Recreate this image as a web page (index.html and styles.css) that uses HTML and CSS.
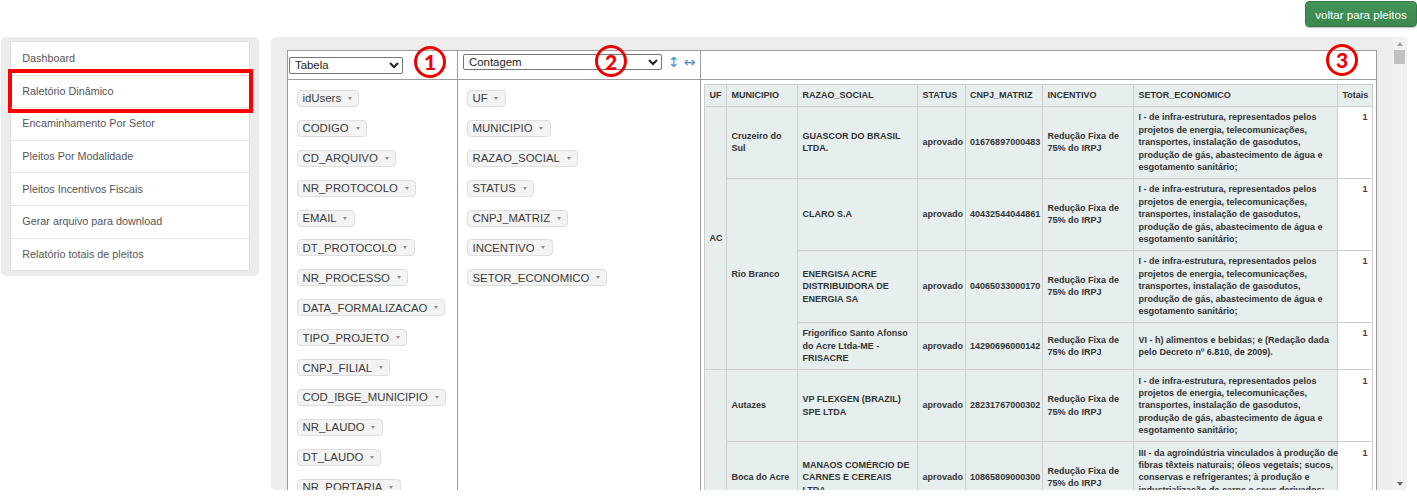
FILE: index.html
```html
<!DOCTYPE html>
<html lang="pt-BR">
<head>
<meta charset="utf-8">
<title>Relatório Dinâmico</title>
<link rel="stylesheet" href="styles.css">
</head>
<body>
<header class="topbar">
  <button class="btn-back" type="button">voltar para pleitos</button>
</header>
<div class="layout">
  <aside class="sidebar">
    <ul class="menu">
      <li class="menu-item">Dashboard</li>
      <li class="menu-item marked">Raletório Dinâmico<span class="mark-box"></span></li>
      <li class="menu-item">Encaminhamento Por Setor</li>
      <li class="menu-item">Pleitos Por Modalidade</li>
      <li class="menu-item">Pleitos Incentivos Fiscais</li>
      <li class="menu-item">Gerar arquivo para download</li>
      <li class="menu-item">Relatório totais de pleitos</li>
    </ul>
  </aside>
  <main class="panel">
    <div class="panel-body">
      <div class="pvt">
        <div class="cell renderers">
          <select class="sel sel-renderer"><option>Tabela</option></select>
        </div>
        <div class="cell vals">
          <select class="sel sel-agg"><option>Contagem</option></select>
          <span class="order row-order">↕</span>
          <span class="order col-order">↔</span>
        </div>
        <div class="cell cols"></div>

        <div class="cell unused">
          <ul class="attr-list">
            <li><span class="chip">idUsers<i class="tri"></i></span></li>
            <li><span class="chip">CODIGO<i class="tri"></i></span></li>
            <li><span class="chip">CD_ARQUIVO<i class="tri"></i></span></li>
            <li><span class="chip">NR_PROTOCOLO<i class="tri"></i></span></li>
            <li><span class="chip">EMAIL<i class="tri"></i></span></li>
            <li><span class="chip">DT_PROTOCOLO<i class="tri"></i></span></li>
            <li><span class="chip">NR_PROCESSO<i class="tri"></i></span></li>
            <li><span class="chip">DATA_FORMALIZACAO<i class="tri"></i></span></li>
            <li><span class="chip">TIPO_PROJETO<i class="tri"></i></span></li>
            <li><span class="chip">CNPJ_FILIAL<i class="tri"></i></span></li>
            <li><span class="chip">COD_IBGE_MUNICIPIO<i class="tri"></i></span></li>
            <li><span class="chip">NR_LAUDO<i class="tri"></i></span></li>
            <li><span class="chip">DT_LAUDO<i class="tri"></i></span></li>
            <li><span class="chip">NR_PORTARIA<i class="tri"></i></span></li>
          </ul>
        </div>
        <div class="cell rows">
          <ul class="attr-list">
            <li><span class="chip">UF<i class="tri"></i></span></li>
            <li><span class="chip">MUNICIPIO<i class="tri"></i></span></li>
            <li><span class="chip">RAZAO_SOCIAL<i class="tri"></i></span></li>
            <li><span class="chip">STATUS<i class="tri"></i></span></li>
            <li><span class="chip">CNPJ_MATRIZ<i class="tri"></i></span></li>
            <li><span class="chip">INCENTIVO<i class="tri"></i></span></li>
            <li><span class="chip">SETOR_ECONOMICO<i class="tri"></i></span></li>
          </ul>
        </div>
        <div class="cell area">
          <table class="pvt-table">
            <colgroup>
              <col style="width:22px"><col style="width:71px"><col style="width:120px"><col style="width:47.6px">
              <col style="width:77.4px"><col style="width:91px"><col style="width:204px"><col style="width:35px">
            </colgroup>
            <thead>
              <tr>
                <th>UF</th><th>MUNICIPIO</th><th>RAZAO_SOCIAL</th><th>STATUS</th><th>CNPJ_MATRIZ</th><th>INCENTIVO</th><th>SETOR_ECONOMICO</th><th class="total-label">Totais</th>
              </tr>
            </thead>
            <tbody>
              <tr>
                <th rowspan="4">AC</th>
                <th>Cruzeiro do<br>Sul</th>
                <th>GUASCOR DO BRASIL<br>LTDA.</th>
                <th>aprovado</th>
                <th>01676897000483</th>
                <th>Redução Fixa de<br>75% do IRPJ</th>
                <th>I - de infra-estrutura, representados pelos<br>projetos de energia, telecomunicações,<br>transportes, instalação de gasodutos,<br>produção de gás, abastecimento de água e<br>esgotamento sanitário;</th>
                <td>1</td>
              </tr>
              <tr>
                <th rowspan="3">Rio Branco</th>
                <th>CLARO S.A</th>
                <th>aprovado</th>
                <th>40432544044861</th>
                <th>Redução Fixa de<br>75% do IRPJ</th>
                <th>I - de infra-estrutura, representados pelos<br>projetos de energia, telecomunicações,<br>transportes, instalação de gasodutos,<br>produção de gás, abastecimento de água e<br>esgotamento sanitário;</th>
                <td>1</td>
              </tr>
              <tr>
                <th>ENERGISA ACRE<br>DISTRIBUIDORA DE<br>ENERGIA SA</th>
                <th>aprovado</th>
                <th>04065033000170</th>
                <th>Redução Fixa de<br>75% do IRPJ</th>
                <th>I - de infra-estrutura, representados pelos<br>projetos de energia, telecomunicações,<br>transportes, instalação de gasodutos,<br>produção de gás, abastecimento de água e<br>esgotamento sanitário;</th>
                <td>1</td>
              </tr>
              <tr>
                <th>Frigorífico Santo Afonso<br>do Acre Ltda-ME -<br>FRISACRE</th>
                <th>aprovado</th>
                <th>14290696000142</th>
                <th>Redução Fixa de<br>75% do IRPJ</th>
                <th>VI - h) alimentos e bebidas; e (Redação dada<br>pelo Decreto nº 6.810, de 2009).</th>
                <td>1</td>
              </tr>
              <tr>
                <th rowspan="3">AM</th>
                <th>Autazes</th>
                <th>VP FLEXGEN (BRAZIL)<br>SPE LTDA</th>
                <th>aprovado</th>
                <th>28231767000302</th>
                <th>Redução Fixa de<br>75% do IRPJ</th>
                <th>I - de infra-estrutura, representados pelos<br>projetos de energia, telecomunicações,<br>transportes, instalação de gasodutos,<br>produção de gás, abastecimento de água e<br>esgotamento sanitário;</th>
                <td>1</td>
              </tr>
              <tr class="tall">
                <th>Boca do Acre</th>
                <th>MANAOS COMÉRCIO DE<br>CARNES E CEREAIS<br>LTDA.</th>
                <th>aprovado</th>
                <th>10865809000300</th>
                <th>Redução Fixa de<br>75% do IRPJ</th>
                <th class="top">III - da agroindústria vinculados à produção de<br>fibras têxteis naturais; óleos vegetais; sucos,<br>conservas e refrigerantes; à produção e<br>industrialização de carne e seus derivados;</th>
                <td>1</td>
              </tr>
              <tr class="rest">
                <th colspan="6"></th>
                <td></td>
              </tr>
            </tbody>
          </table>
        </div>

        <span class="mark-circle c1">1</span>
        <span class="mark-circle c2">2</span>
        <span class="mark-circle c3">3</span>
      </div>
    </div>
    <div class="scrollbar">
      <span class="sb-btn"><i class="sb-up"></i></span>
      <span class="sb-track"><span class="sb-thumb"></span></span>
      <span class="sb-btn"><i class="sb-down"></i></span>
    </div>
  </main>
</div>
</body>
</html>
```

FILE: styles.css
```css
* { box-sizing: border-box; }
html, body { margin: 0; padding: 0; }
body {
  width: 1417px;
  height: 496px;
  overflow: hidden;
  background: #fff;
  font-family: "Liberation Sans", Arial, sans-serif;
  color: #333;
}

/* top bar */
.topbar {
  height: 37px;
  display: flex;
  justify-content: flex-end;
  align-items: flex-start;
  padding-top: 1px;
}
.btn-back {
  width: 112px;
  height: 26px;
  padding: 0;
  border: 1px solid #35794a;
  border-radius: 4px;
  background: linear-gradient(#43935a, #3a884e);
  color: #fff;
  font: 11.6px "Liberation Sans", Arial, sans-serif;
  box-shadow: 0 1px 1px rgba(0, 0, 0, .25);
}

/* layout */
.layout {
  display: flex;
  align-items: flex-start;
  gap: 12px;
  padding-left: 1px;
}

/* sidebar */
.sidebar {
  width: 258px;
  flex: none;
  background: #ececec;
  border-radius: 5px;
  padding: 4px 9px 5px 9px;
}
.menu {
  list-style: none;
  margin: 0;
  padding: 0;
  background: #fff;
  border: 1px solid #dedede;
  border-radius: 3px;
}
.menu-item {
  position: relative;
  height: 32.6px;
  display: flex;
  align-items: center;
  padding: 0 0 1px 11.3px;
  font-size: 10.8px;
  color: #555;
}
.menu-item + .menu-item { border-top: 1px solid #e4e4e4; }
.mark-box {
  position: absolute;
  left: -3px;
  right: -4px;
  top: -7px;
  bottom: -6px;
  border: 4px solid #f00;
}

/* main panel */
.panel {
  flex: 1;
  min-width: 0;
  margin-right: 10px;
  height: 453px;
  background: #ededed;
  border-radius: 5px;
  display: flex;
  overflow: hidden;
}
.panel-body {
  flex: 1;
  min-width: 0;
  padding: 13px 15px 0 16px;
  overflow: hidden;
}

/* pivot ui */
.pvt {
  position: relative;
  width: 1090px;
  display: grid;
  grid-template-columns: 170px 243px 676px;
  grid-template-rows: 29px auto;
  border-left: 1px solid #9c9c9c;
  border-top: 1px solid #9c9c9c;
  background: #fff;
}
.cell {
  border-right: 1px solid #9c9c9c;
  border-bottom: 1px solid #9c9c9c;
  min-width: 0;
}
.renderers { padding: 4px 0 0 1px; }
.vals {
  display: flex;
  align-items: flex-start;
  padding: 3px 0 0 5px;
}
.sel {
  font: 11.4px "Liberation Sans", Arial, sans-serif;
  height: 16px;
  padding: 0 0 0 1px;
  border: 1px solid #767676;
  border-radius: 2px;
  background: #fff;
  color: #222;
}
.sel-renderer { width: 114px; height: 17px; }
.sel-agg { width: 199px; }
.order {
  font: 14px/16px "DejaVu Sans", sans-serif;
  color: #4a8bd0;
}
.row-order { margin-left: 6px; }
.col-order { margin-left: 4px; }

.attr-list {
  list-style: none;
  margin: 0;
  padding: 3.55px 0 0 9px;
}
.attr-list li {
  height: 29.9px;
  display: flex;
  align-items: center;
}
.chip {
  display: inline-flex;
  align-items: center;
  height: 17px;
  padding: 0 6.3px 0 4.5px;
  background: #f3f3f3;
  border: 1px solid #dedede;
  border-radius: 4px;
  font-size: 11.4px;
  color: #3a3a3a;
  white-space: nowrap;
}
.tri {
  width: 0;
  height: 0;
  margin-left: 6.8px;
  border-left: 2px solid transparent;
  border-right: 2px solid transparent;
  border-top: 3px solid #8c8c8c;
}

.area { padding: 4px 0 0 3px; }

/* pivot table */
.pvt-table {
  border-collapse: collapse;
  table-layout: fixed;
  width: 668px;
  font-size: 9px;
  line-height: 12.4px;
  font-weight: bold;
  color: #333;
  text-align: left;
}
.pvt-table th,
.pvt-table td {
  border: 1px solid #cdcdcd;
  padding: 4.5px;
  white-space: nowrap;
  overflow: visible;
}
.pvt-table th {
  background: #e6eeee;
  vertical-align: middle;
  font-weight: bold;
}
.pvt-table thead th { padding-top: 4.2px; padding-bottom: 4.2px; }
.pvt-table td {
  background: #fff;
  vertical-align: top;
  text-align: right;
  color: #3d3d3d;
}
.pvt-table .total-label { text-align: right; }
.pvt-table .tall th { height: 71.5px; }
.pvt-table th.top { vertical-align: top; }
.pvt-table .rest th,
.pvt-table .rest td { height: 260px; }

/* annotation circles */
.mark-circle {
  position: absolute;
  width: 32px;
  height: 32px;
  border: 3px solid #ee0000;
  border-radius: 50%;
  display: flex;
  align-items: center;
  justify-content: center;
  font: 900 21px "Lato", "Liberation Sans", sans-serif;
  color: #ee0000;
}
.c1 { left: 126px; top: -5.5px; }
.c2 { left: 307px; top: -6px; }
.c3 { left: 1038px; top: -7.5px; }

/* fake scrollbar */
.scrollbar {
  width: 15px;
  flex: none;
  background: #f1f1f1;
  display: flex;
  flex-direction: column;
}
.sb-btn {
  height: 13px;
  display: flex;
  align-items: center;
  justify-content: center;
}
.sb-up {
  width: 0;
  height: 0;
  border-left: 3.5px solid transparent;
  border-right: 3.5px solid transparent;
  border-bottom: 4px solid #a3a3a3;
}
.sb-down {
  width: 0;
  height: 0;
  border-left: 3.5px solid transparent;
  border-right: 3.5px solid transparent;
  border-top: 4px solid #6a6a6a;
}
.sb-track {
  flex: 1;
  padding: 0 2px;
}
.sb-thumb {
  display: block;
  height: 14px;
  background: #c1c1c1;
}
```
